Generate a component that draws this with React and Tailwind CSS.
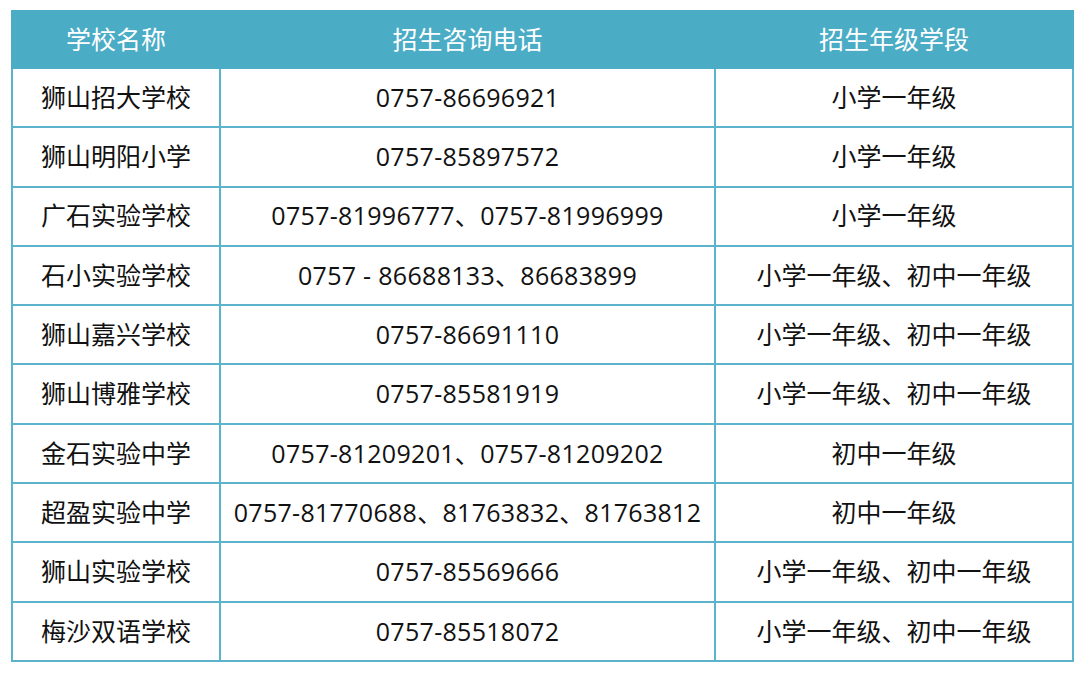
const rows = [
  ["狮山招大学校", "0757-86696921", "小学一年级"],
  ["狮山明阳小学", "0757-85897572", "小学一年级"],
  ["广石实验学校", "0757-81996777、0757-81996999", "小学一年级"],
  ["石小实验学校", "0757 - 86688133、86683899", "小学一年级、初中一年级"],
  ["狮山嘉兴学校", "0757-86691110", "小学一年级、初中一年级"],
  ["狮山博雅学校", "0757-85581919", "小学一年级、初中一年级"],
  ["金石实验中学", "0757-81209201、0757-81209202", "初中一年级"],
  ["超盈实验中学", "0757-81770688、81763832、81763812", "初中一年级"],
  ["狮山实验学校", "0757-85569666", "小学一年级、初中一年级"],
  ["梅沙双语学校", "0757-85518072", "小学一年级、初中一年级"],
];

export default function App() {
  return (
    <div
      className="w-[1080px] h-[673px] bg-white pt-[10px] pl-[11px]"
      style={{ fontFamily: '"Open Sans", "Noto Sans CJK SC", sans-serif' }}
    >
      <table className="border-collapse table-fixed w-[1061px] border-2 border-[#4bacc6]">
        <colgroup>
          <col className="w-[208px]" />
          <col className="w-[495px]" />
          <col className="w-[358px]" />
        </colgroup>
        <thead>
          <tr className="h-[57px] bg-[#4bacc6] text-white">
            <th className="font-normal text-[25px] text-center border-2 border-[#4bacc6]">学校名称</th>
            <th className="font-normal text-[25px] text-center border-2 border-[#4bacc6]">招生咨询电话</th>
            <th className="font-normal text-[25px] text-center border-2 border-[#4bacc6]">招生年级学段</th>
          </tr>
        </thead>
        <tbody>
          {rows.map((r, i) => (
            <tr key={i} className="h-[59.3px] text-[#111]">
              <td className="text-[25px] text-center border-2 border-[#5cb4cc] p-0">{r[0]}</td>
              <td className="text-[25px] tracking-[0.3px] text-center border-2 border-[#5cb4cc] p-0">{r[1]}</td>
              <td className="text-[25px] text-center border-2 border-[#5cb4cc] p-0">{r[2]}</td>
            </tr>
          ))}
        </tbody>
      </table>
    </div>
  );
}
